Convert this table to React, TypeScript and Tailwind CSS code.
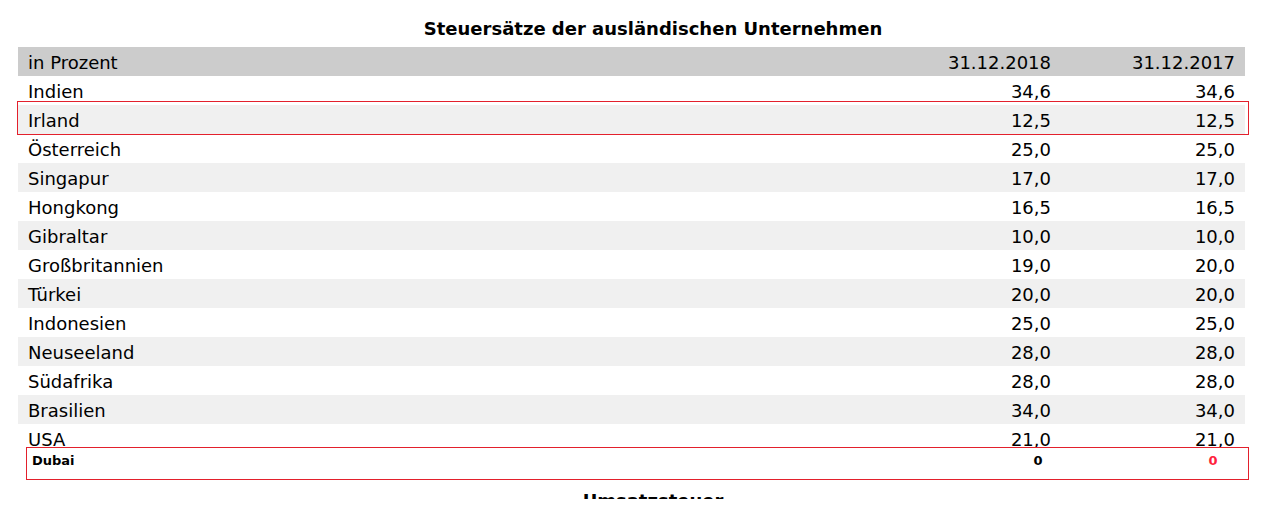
const rows: [string, string, string][] = [
  ["Indien", "34,6", "34,6"],
  ["Irland", "12,5", "12,5"],
  ["Österreich", "25,0", "25,0"],
  ["Singapur", "17,0", "17,0"],
  ["Hongkong", "16,5", "16,5"],
  ["Gibraltar", "10,0", "10,0"],
  ["Großbritannien", "19,0", "20,0"],
  ["Türkei", "20,0", "20,0"],
  ["Indonesien", "25,0", "25,0"],
  ["Neuseeland", "28,0", "28,0"],
  ["Südafrika", "28,0", "28,0"],
  ["Brasilien", "34,0", "34,0"],
  ["USA", "21,0", "21,0"],
];

export default function App() {
  return (
    <div className="relative h-[509px] w-[1283px] overflow-hidden bg-white font-['DejaVu_Sans',Verdana,sans-serif] text-black">
      <div className="h-[499px] overflow-hidden">
        <div className="flex justify-center pl-[23px] pt-[18px] text-[18px] font-bold leading-[22px]">
          Steuersätze der ausländischen Unternehmen
        </div>

        <div className="mx-[18px] mt-[7px] w-[1227px] text-[18px]">
          <div className="grid h-[29px] grid-cols-[1fr_184px_184px] bg-[#cccccc] pt-[2px] leading-[27px]">
            <div className="pl-[10px]">in Prozent</div>
            <div className="pr-[10px] text-right">31.12.2018</div>
            <div className="pr-[10px] text-right">31.12.2017</div>
          </div>
          {rows.map(([land, a, b], i) => (
            <div
              key={land}
              className={`grid h-[29px] grid-cols-[1fr_184px_184px] pt-[2px] leading-[27px] ${
                i % 2 === 1 ? "bg-[#f0f0f0]" : "bg-white"
              }`}
            >
              <div className="pl-[10px]">{land}</div>
              <div className="pr-[10px] text-right">{a}</div>
              <div className="pr-[10px] text-right">{b}</div>
            </div>
          ))}
        </div>

        <div className="mt-[37px] flex justify-center pl-[23px] text-[18px] font-bold leading-[22px]">
          Umsatzsteuer
        </div>
      </div>

      {/* highlight on Irland */}
      <div className="pointer-events-none absolute left-[17px] top-[101px] h-[34px] w-[1232px] border border-[#e3202c]" />

      {/* Dubai row laid over the table end */}
      <div className="absolute left-[26px] top-[447px] flex h-[33px] w-[1223px] border border-[#e3202c] bg-white pt-[5px] text-[13px] font-bold leading-[16px]">
        <div className="flex-1 pl-[5px]">Dubai</div>
        <div className="w-[70px] text-center">0</div>
        <div className="ml-[105px] w-[70px] text-center text-[#ff1f3d]">0</div>
      </div>
    </div>
  );
}
